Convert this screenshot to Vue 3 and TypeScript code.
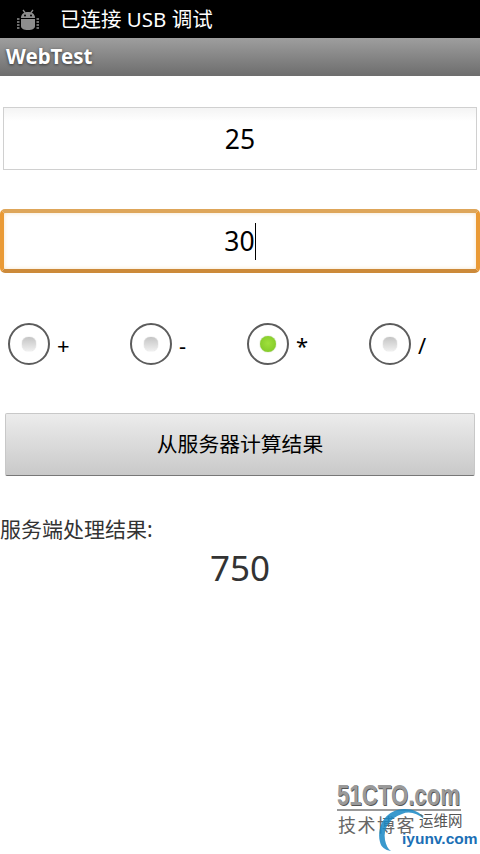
<template>
  <div class="screen">
    <div class="status-bar">
      <svg class="bug" width="24" height="24" viewBox="0 0 24 24">
        <path d="M7 3l2.4 3M17 3l-2.4 3" stroke="#8e8e8e" stroke-width="1.3" fill="none" />
        <path d="M5 11C5 7 8 5 12 5s7 2 7 6z" fill="#8e8e8e" />
        <path d="M5 12h14v7c0 2.500-2.500 4-7 4s-7-1.500-7-4z" fill="#8e8e8e" />
        <circle cx="9" cy="8.500" r="1" fill="#000" />
        <circle cx="15" cy="8.500" r="1" fill="#000" />
        <path d="M1 12h2.500M1 15h2.500M1 18h2.500M1 21h2.500M20.500 12H23M20.500 15H23M20.500 18H23M20.500 21H23" stroke="#8e8e8e" stroke-width="1.600" />
      </svg>
      <span class="status-text">已连接 USB 调试</span>
    </div>
    <div class="title-bar">WebTest</div>

    <div class="field field-first"><span>25</span></div>
    <div class="field field-focus"><span>30</span><i class="caret"></i></div>

    <div class="radios">
      <div v-for="op in ops" :key="op.label" class="radio-item" :class="op.cls">
        <span class="radio" :class="{ checked: op.label === selected }"><b></b></span>
        <span class="radio-label">{{ op.label }}</span>
      </div>
    </div>

    <div class="calc-btn">从服务器计算结果</div>

    <div class="result-label">服务端处理结果:</div>
    <div class="result">{{ result }}</div>

    <div class="watermark">
      <div class="wm-cto">51CTO.com</div>
      <div class="wm-line"></div>
      <div class="wm-blog">技术博客</div>
      <svg class="wm-swoosh" width="60" height="50" viewBox="0 0 60 50">
        <path d="M8 38C4 20 16 5 32 5c9 0 17 3 20 10-7-6-15-8-22-5C18 14 11 24 13 36c1 5 3 9 6 11-6-1-10-4-11-9z" fill="#1787c4" opacity="0.85" />
      </svg>
      <div class="wm-yw">运维网</div>
      <div class="wm-iyunv">iyunv.com</div>
    </div>
  </div>
</template>

<script setup lang="ts">
const ops = [
  { label: '+', cls: 'w-a' },
  { label: '-', cls: 'w-b' },
  { label: '*', cls: 'w-a' },
  { label: '/', cls: 'w-c' },
]
const selected = '*'
const result = 25 * 30 === 750 ? '750' : ''
</script>

<style>
html,
body {
  margin: 0;
  background: #fff;
}
</style>

<style scoped>
.screen {
  position: relative;
  width: 480px;
  height: 854px;
  overflow: hidden;
  background: #fff;
  font-family: 'Noto Sans', 'Noto Sans CJK SC', sans-serif;
  color: #000;
}

.status-bar {
  height: 38px;
  background: #000;
  display: flex;
  align-items: center;
  padding-left: 16px;
  box-sizing: border-box;
}

.bug {
  flex: none;
}

.status-text {
  margin-left: 20px;
  color: #fff;
  font-size: 20.500px;
  line-height: 40px;
}

.title-bar {
  height: 38px;
  box-sizing: border-box;
  padding-left: 6px;
  line-height: 37px;
  font-size: 20.500px;
  font-weight: 700;
  color: #fff;
  background: linear-gradient(#9e9e9e, #6d6d6d);
  text-shadow: 0 1px 3px #333;
}

.field {
  display: flex;
  align-items: center;
  justify-content: center;
  box-sizing: border-box;
  font-size: 26.500px;
}

.field-first {
  height: 63px;
  margin: 31px 3px 0;
  border: 1px solid #d0d0d0;
  background: linear-gradient(#f4f4f4, #fff 22%);
}

.field-focus {
  height: 64px;
  margin-top: 39px;
  border: 4px solid;
  border-color: #dea65a #ea9a35 #cc8a3a;
  border-radius: 5px;
  background: #fff;
  box-shadow: inset 0 0 4px #f5e3c8;
}

.caret {
  width: 1px;
  height: 37px;
  background: #000;
}

.radios {
  display: flex;
  margin-top: 50px;
  padding-left: 8px;
  height: 42px;
}

.radio-item {
  display: flex;
  flex: none;
}

.w-a {
  width: 122px;
}

.w-b {
  width: 117px;
}

.w-c {
  width: 110px;
}

.radio {
  width: 42px;
  height: 42px;
  box-sizing: border-box;
  border: 2px solid #5c5c5c;
  border-radius: 50%;
  display: flex;
  align-items: center;
  justify-content: center;
  background: #fff;
}

.radio b {
  width: 14px;
  height: 14px;
  border-radius: 45%;
  background: linear-gradient(#c4c4c4, #efefef);
  box-shadow: 0 0 1px #aaa;
}

.radio.checked b {
  width: 16px;
  height: 16px;
  border-radius: 50%;
  background: radial-gradient(circle at 50% 45%, #9fe03c, #7cc424);
  box-shadow: 0 0 1px #6a9a30;
}

.radio-label {
  margin-left: 7px;
  margin-top: 6px;
  font-size: 22px;
  line-height: 32px;
}

.calc-btn {
  height: 63px;
  margin: 48px 5px 0;
  padding-bottom: 3px;
  box-sizing: border-box;
  display: flex;
  align-items: center;
  justify-content: center;
  font-size: 20.800px;
  border-radius: 2px;
  border: 1px solid #c8c8c8;
  border-bottom: 1px solid #777;
  background: linear-gradient(#ececec, #c9c9c9);
}

.result-label {
  margin-top: 38px;
  font-size: 21px;
  line-height: 30px;
  color: #333;
}

.result {
  margin-top: -1px;
  text-align: center;
  font-size: 35px;
  line-height: 50px;
  color: #333;
}

/* overlaid site stamp */
.watermark {
  position: absolute;
  left: 320px;
  top: 770px;
  width: 160px;
  height: 84px;
}

.wm-cto {
  position: absolute;
  left: 17px;
  top: 8px;
  white-space: nowrap;
  transform: scaleX(0.74);
  transform-origin: left center;
  font-family: 'Liberation Sans', sans-serif;
  font-size: 30px;
  font-weight: 700;
  line-height: 34px;
  color: #9a9a9a;
  text-shadow: 1px 1px 0 #555;
}

.wm-line {
  position: absolute;
  left: 17px;
  top: 39px;
  width: 124px;
  height: 2px;
  background: #999;
}

.wm-blog {
  position: absolute;
  left: 18px;
  top: 43px;
  white-space: nowrap;
  font-size: 18px;
  line-height: 24px;
  letter-spacing: 1.500px;
  color: #666;
}

.wm-yw {
  position: absolute;
  left: 99px;
  top: 41px;
  white-space: nowrap;
  font-size: 14.500px;
  line-height: 18px;
  color: #555;
}

.wm-iyunv {
  position: absolute;
  left: 82px;
  top: 59px;
  white-space: nowrap;
  font-family: 'Liberation Sans', sans-serif;
  font-size: 15.500px;
  font-weight: 700;
  line-height: 20px;
  color: #1b6fb5;
  text-shadow: 0 0 2px #fff;
}

.wm-swoosh {
  position: absolute;
  left: 52px;
  top: 34px;
}
</style>
